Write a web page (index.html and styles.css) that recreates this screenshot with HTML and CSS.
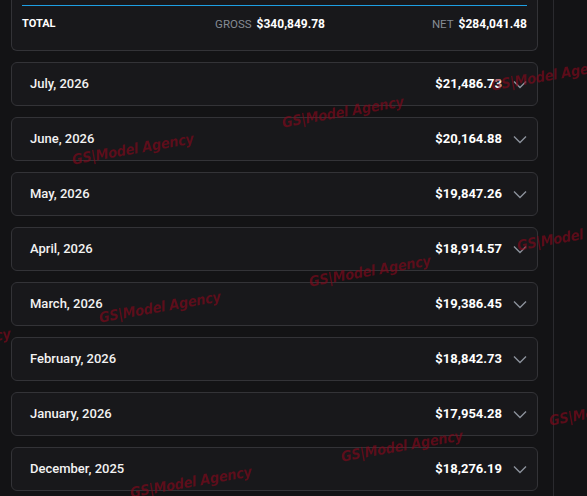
FILE: index.html
```html
<!DOCTYPE html>
<html lang="en">
<head>
  <meta charset="UTF-8" />
  <meta name="viewport" content="width=device-width, initial-scale=1.0"/>
  <title>Earnings by month</title>
  <link rel="stylesheet" href="styles.css">
</head>
<body>
  <div class="layout">
    <main class="main">
      <div class="summary">
        <div class="total-row">
          <span class="total-label">TOTAL</span>
          <span class="total-cell"><span class="muted">GROSS</span> $340,849.78</span>
          <span class="total-cell"><span class="muted">NET</span> $284,041.48</span>
        </div>
      </div>

      <div class="month">
        <span class="month-name">July, 2026</span>
        <span class="month-amount">$21,486.73</span>
        <svg class="chevron" viewBox="0 0 16 16"><path d="M2 5.5l6 6 6-6"/></svg>
      </div>
      <div class="month">
        <span class="month-name">June, 2026</span>
        <span class="month-amount">$20,164.88</span>
        <svg class="chevron" viewBox="0 0 16 16"><path d="M2 5.5l6 6 6-6"/></svg>
      </div>
      <div class="month">
        <span class="month-name">May, 2026</span>
        <span class="month-amount">$19,847.26</span>
        <svg class="chevron" viewBox="0 0 16 16"><path d="M2 5.5l6 6 6-6"/></svg>
      </div>
      <div class="month">
        <span class="month-name">April, 2026</span>
        <span class="month-amount">$18,914.57</span>
        <svg class="chevron" viewBox="0 0 16 16"><path d="M2 5.5l6 6 6-6"/></svg>
      </div>
      <div class="month">
        <span class="month-name">March, 2026</span>
        <span class="month-amount">$19,386.45</span>
        <svg class="chevron" viewBox="0 0 16 16"><path d="M2 5.5l6 6 6-6"/></svg>
      </div>
      <div class="month">
        <span class="month-name">February, 2026</span>
        <span class="month-amount">$18,842.73</span>
        <svg class="chevron" viewBox="0 0 16 16"><path d="M2 5.5l6 6 6-6"/></svg>
      </div>
      <div class="month">
        <span class="month-name">January, 2026</span>
        <span class="month-amount">$17,954.28</span>
        <svg class="chevron" viewBox="0 0 16 16"><path d="M2 5.5l6 6 6-6"/></svg>
      </div>
      <div class="month">
        <span class="month-name">December, 2025</span>
        <span class="month-amount">$18,276.19</span>
        <svg class="chevron" viewBox="0 0 16 16"><path d="M2 5.5l6 6 6-6"/></svg>
      </div>
    </main>
    <aside class="side"></aside>
  </div>

  <!-- watermark overlay -->
  <div class="watermarks">
    <span class="wm wm-1">GS|Model Agency</span>
    <span class="wm wm-2">GS|Model Agency</span>
    <span class="wm wm-3">GS|Model Agency</span>
    <span class="wm wm-4">GS|Model Agency</span>
    <span class="wm wm-5">GS|Model Agency</span>
    <span class="wm wm-6">GS|Model Agency</span>
    <span class="wm wm-7">GS|Model Agency</span>
    <span class="wm wm-8">GS|Model Agency</span>
    <span class="wm wm-9">GS|Model Agency</span>
    <span class="wm wm-10">GS|Model Agency</span>
  </div>
</body>
</html>
```

FILE: styles.css
```css
body {
  margin: 0;
  padding: 0;
  background: #131315;
  font-family: Roboto, "Noto Sans", sans-serif;
  color: #f2f2f2;
  height: 496px;
  overflow: hidden;
}
.layout {
  display: flex;
  height: 100%;
}
.main {
  width: 527px;
  padding: 0 15px 0 11px;
  border-right: 1px solid #2a2a2e;
  display: flex;
  flex-direction: column;
  gap: 11px;
}
.side {
  flex: 1;
}
.summary {
  background: #18181b;
  border: 1px solid #333337;
  border-top: none;
  border-radius: 0 0 6px 6px;
  padding: 5px 10px 11px;
}
.total-row {
  display: grid;
  grid-template-columns: 1fr 202px 202px;
  align-items: center;
  border-top: 1px solid #1e9fe3;
  padding: 10px 0 7px;
  line-height: 16px;
  font-size: 12px;
  font-weight: 700;
  color: #fff;
}
.total-label {
  font-size: 11px;
}
.total-cell {
  text-align: right;
}
.muted {
  color: #868b94;
  font-weight: 400;
  font-size: 11.5px;
  margin-right: 2px;
}
.month {
  display: flex;
  align-items: center;
  background: #18181b;
  border: 1px solid #333337;
  border-radius: 6px;
  padding: 13px 9px 13px 18px;
  line-height: 16px;
  font-size: 13px;
}
.month-name {
  flex: 1;
  font-weight: 500;
}
.month-amount {
  font-weight: 700;
  color: #fff;
}
.chevron {
  width: 16px;
  height: 16px;
  margin-left: 10px;
  fill: none;
  stroke: #8b919b;
  stroke-width: 1.4;
}
.watermarks {
  position: fixed;
  inset: 0;
  pointer-events: none;
  overflow: hidden;
}
.wm {
  position: absolute;
  transform: translate(-50%, -50%) rotate(-10deg);
  white-space: nowrap;
  font-family: "DejaVu Sans Condensed", "DejaVu Sans", sans-serif;
  font-stretch: condensed;
  font-style: italic;
  font-weight: 700;
  font-size: 14.5px;
  letter-spacing: -0.3px;
  color: rgba(135, 8, 28, 0.62);
}
.wm-1 { left: 133px; top: 149px; }
.wm-2 { left: 343px; top: 112px; }
.wm-3 { left: 552px; top: 75px; }
.wm-4 { left: -50px; top: 344px; }
.wm-5 { left: 160px; top: 307px; }
.wm-6 { left: 370px; top: 271px; }
.wm-7 { left: 578px; top: 235px; }
.wm-8 { left: 191px; top: 482px; }
.wm-9 { left: 402px; top: 446px; }
.wm-10 { left: 610px; top: 410px; }
```
